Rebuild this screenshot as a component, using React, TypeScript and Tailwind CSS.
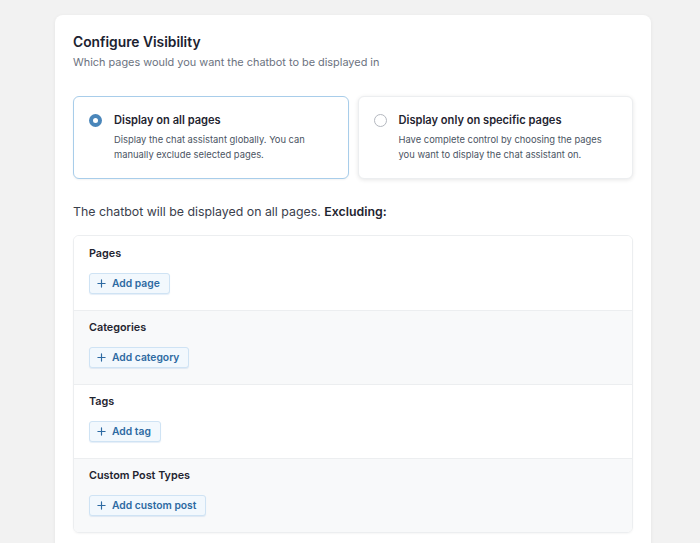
import React from "react";

const font = { fontFamily: "Inter, 'Liberation Sans', sans-serif" };

function Plus() {
  return (
    <svg width="9" height="9" viewBox="0 0 10 10" fill="none" stroke="currentColor" strokeWidth="1.3" strokeLinecap="round">
      <path d="M5 1v8M1 5h8" />
    </svg>
  );
}

function Section({ label, btn, gray, first }: { label: string; btn: string; gray?: boolean; first?: boolean }) {
  return (
    <div className={`h-[74px] px-[15px] pt-[10px] ${gray ? "bg-[#f8f9fa]" : "bg-white"} ${first ? "" : "border-t border-[#eceef0]"}`}>
      <div className={`text-[10.8px] leading-[14px] font-semibold text-[#1f2430] ${first ? "pt-[1px]" : ""}`}>{label}</div>
      <button className="mt-[12px] h-[21px] flex items-center gap-[6px] pl-[7px] pr-[9px] rounded-[3px] border border-[#cfe3f4] bg-[#f2f8fd] text-[#2d6aa2] text-[10.3px] font-semibold shadow-[0_1px_1px_rgba(80,140,200,0.15)]">
        <Plus />
        <span>{btn}</span>
      </button>
    </div>
  );
}

export default function App() {
  return (
    <div style={font} className="w-[700px] h-[543px] bg-[#f2f2f2] overflow-hidden pt-[15px] pl-[55px]">
      <div className="w-[596px] h-[600px] bg-white rounded-[8px] shadow-[0_1px_4px_rgba(0,0,0,0.06)] px-[18px] pt-[17px]">
        <h1 className="text-[13.8px] leading-5 font-semibold text-[#1c2230]">Configure Visibility</h1>
        <p className="mt-[2px] text-[10.9px] leading-4 text-[#6b7280]">Which pages would you want the chatbot to be displayed in</p>

        <div className="mt-[26px] grid grid-cols-2 gap-[9px]">
          <div className="h-[83px] rounded-[6px] border border-[#a8cdea] bg-white px-[15px] pt-[16px] flex gap-[12px] shadow-[0_1px_2px_rgba(0,0,0,0.05)]">
            <div className="mt-[1px] w-[13px] h-[13px] rounded-full bg-[#4a86ba] flex items-center justify-center shrink-0">
              <div className="w-[5px] h-[5px] rounded-full bg-white" />
            </div>
            <div>
              <div className="text-[11.1px] leading-[14px] font-semibold text-[#1f2430]">Display on all pages</div>
              <div className="mt-[5px] text-[9.4px] leading-[15px] text-[#4b5563]">
                Display the chat assistant globally. You can<br />manually exclude selected pages.
              </div>
            </div>
          </div>
          <div className="h-[83px] rounded-[6px] border border-[#eceef0] bg-white px-[15px] pt-[16px] flex gap-[12px] shadow-[0_1px_4px_rgba(0,0,0,0.1)]">
            <div className="mt-[1px] w-[13px] h-[13px] rounded-full border border-[#b4b8bf] bg-white shrink-0" />
            <div>
              <div className="text-[11.1px] leading-[14px] font-semibold text-[#1f2430]">Display only on specific pages</div>
              <div className="mt-[5px] text-[9.4px] leading-[15px] text-[#4b5563]">
                Have complete control by choosing the pages<br />you want to display the chat assistant on.
              </div>
            </div>
          </div>
        </div>

        <p className="mt-[24px] text-[12.35px] leading-[18px] text-[#3a404c]">
          The chatbot will be displayed on all pages. <span className="font-semibold text-[#1f2430]">Excluding:</span>
        </p>

        <div className="mt-[14px] rounded-[6px] border border-[#eceef0] overflow-hidden shadow-[0_1px_2px_rgba(0,0,0,0.04)]">
          <Section label="Pages" btn="Add page" first />
          <Section label="Categories" btn="Add category" gray />
          <Section label="Tags" btn="Add tag" />
          <Section label="Custom Post Types" btn="Add custom post" gray />
        </div>
      </div>
    </div>
  );
}
